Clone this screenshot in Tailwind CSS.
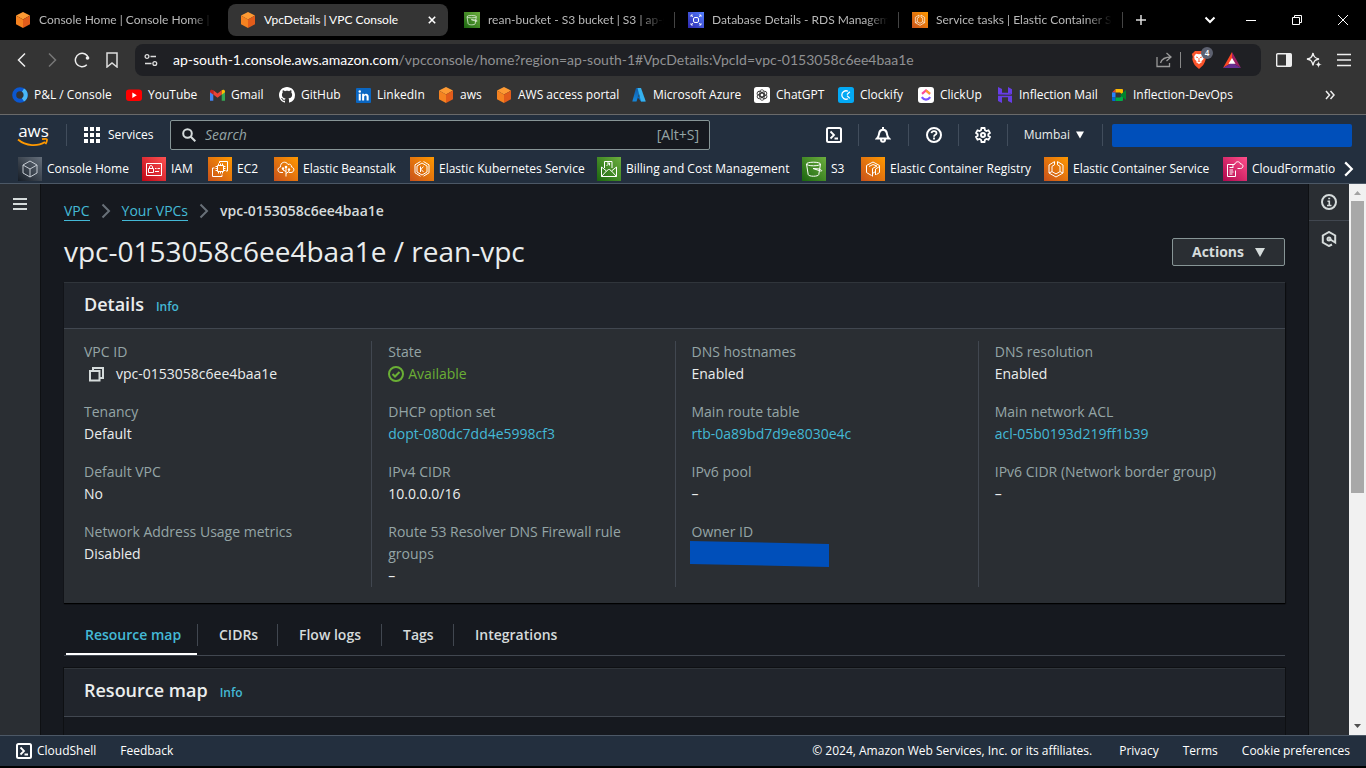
<!DOCTYPE html>
<html lang="en">
<head>
<meta charset="utf-8">
<meta name="viewport" content="width=device-width, initial-scale=1">
<title>VpcDetails | VPC Console</title>
<script src="https://cdn.jsdelivr.net/npm/@tailwindcss/browser@4"></script>
</head>
<body class="h-screen flex flex-col overflow-hidden bg-black text-white text-xs font-['Open_Sans',sans-serif]">

<svg class="absolute w-0 h-0" aria-hidden="true">
  <defs>
    <linearGradient id="g-orange" x1="0" y1="1" x2="1" y2="0"><stop stop-color="#c8511b"/><stop offset="1" stop-color="#f90"/></linearGradient>
    <linearGradient id="g-green" x1="0" y1="1" x2="1" y2="0"><stop stop-color="#1b660f"/><stop offset="1" stop-color="#6cae3e"/></linearGradient>
    <linearGradient id="g-red" x1="0" y1="1" x2="1" y2="0"><stop stop-color="#bd0816"/><stop offset="1" stop-color="#ff5252"/></linearGradient>
    <linearGradient id="g-pink" x1="0" y1="1" x2="1" y2="0"><stop stop-color="#b0084d"/><stop offset="1" stop-color="#ff4f8b"/></linearGradient>
    <linearGradient id="g-blue" x1="0" y1="1" x2="1" y2="0"><stop stop-color="#2e27ad"/><stop offset="1" stop-color="#527fff"/></linearGradient>
    <linearGradient id="g-gray" x1="0" y1="1" x2="1" y2="0"><stop stop-color="#161d26"/><stop offset="1" stop-color="#656f7b"/></linearGradient>
    <linearGradient id="g-az" x1="0" y1="0" x2="0" y2="1"><stop stop-color="#0f5ba8"/><stop offset="1" stop-color="#1488dc"/></linearGradient>
  </defs>
  <symbol id="cube" viewBox="0 0 16 16"><path d="M8 0l7 3.6L8 7.6 1 3.6z" fill="#fd9a33"/><path d="M1 3.6l7 4V16l-7-3.8z" fill="#f58220"/><path d="M15 3.6l-7 4V16l7-3.8z" fill="#e25c1a"/></symbol>
  <symbol id="s3" viewBox="0 0 24 24"><path fill="url(#g-green)" d="M0 0h24v24H0z"/><g fill="none" stroke="#fff"><ellipse cx="11.500" cy="7" rx="7" ry="1.800"/><path d="M4.500 7l1.700 10.500c.3 2.300 10.300 2.300 10.600 0L18.500 7M11 11.500l7.500 2.500c2 .3 1.500-1-1-2z"/></g></symbol>
  <symbol id="ecs" viewBox="0 0 24 24"><path fill="url(#g-orange)" d="M0 0h24v24H0z"/><g fill="none" stroke="#fff"><path d="M10.500 4.600L5 8v8l7 4 7-4V8l-5.500-3.400"/><path d="M10.500 7.800L8 9.300v5.300l4 2.300 4-2.300V9.300l-2.500-1.500M10.500 4.600v3.200M13.500 4.600v3.200M5 16l3-1.400M19 16l-3-1.400"/></g></symbol>
  <symbol id="shell" viewBox="0 0 16 16"><rect x="1" y="1" width="14" height="14" rx="1.500" fill="none" stroke="currentColor" stroke-width="2"/><path d="M4.500 4.500L8 8l-3.500 3.500M8.500 11.500H12" fill="none" stroke="currentColor" stroke-width="1.800"/></symbol>
</svg>

<!-- Browser tab strip -->
<header class="h-10 shrink-0 flex items-center bg-black pl-[3px] text-[#b9b9b9] text-xs font-['Lato','Open_Sans',sans-serif]">
  <nav class="flex gap-1 items-center" aria-label="Tabs">
    <a href="#" class="w-[221px] h-8 px-3 flex items-center gap-2"><svg class="size-4 shrink-0"><use href="#cube"/></svg><span class="flex-1 overflow-hidden whitespace-nowrap [mask-image:linear-gradient(to_right,#000_88%,transparent)]">Console Home | Console Home | ap-south-1</span></a>
    <a href="#" class="w-[220px] h-8 px-3 flex items-center gap-2 rounded-lg bg-[#343434] text-white"><svg class="size-4 shrink-0"><use href="#cube"/></svg><span class="flex-1 whitespace-nowrap">VpcDetails | VPC Console</span><svg class="size-2" viewBox="0 0 8 8" stroke="#fff" stroke-width="1.600"><path d="M.8.8l6.400 6.400M7.200.8L.8 7.200"/></svg></a>
    <a href="#" class="w-[223px] -mr-[3px] h-8 pl-3 flex items-center gap-2"><svg class="size-4 shrink-0"><use href="#s3"/></svg><span class="flex-1 overflow-hidden whitespace-nowrap [mask-image:linear-gradient(to_right,#000_85%,transparent)]">rean-bucket - S3 bucket | S3 | ap-south-1</span><i class="w-px h-4 ml-0.5 bg-[#444]"></i></a>
    <a href="#" class="w-[223px] -mr-[3px] h-8 pl-3 flex items-center gap-2"><svg class="size-4 shrink-0" viewBox="0 0 16 16"><path fill="url(#g-blue)" d="M0 0h16v16H0z"/><g fill="none" stroke="#fff"><path d="M3 5V3h2M11 3h2v2M3 11v2h2M11 13h2v-2M3 3l2 2M13 3l-2 2M3 13l2-2M13 13l-2-2" stroke-width=".8"/><rect x="5.500" y="5.500" width="5" height="5" rx="1.500"/></g></svg><span class="flex-1 overflow-hidden whitespace-nowrap [mask-image:linear-gradient(to_right,#000_88%,transparent)]">Database Details - RDS Management Console</span><i class="w-px h-4 ml-0.5 bg-[#444]"></i></a>
    <a href="#" class="w-[223px] h-8 pl-3 flex items-center gap-2"><svg class="size-4 shrink-0"><use href="#ecs"/></svg><span class="flex-1 overflow-hidden whitespace-nowrap [mask-image:linear-gradient(to_right,#000_85%,transparent)]">Service tasks | Elastic Container Service</span><i class="w-px h-4 ml-0.5 bg-[#444]"></i></a>
  </nav>
  <button aria-label="New tab" class="ml-3"><svg class="size-3" viewBox="0 0 12 12" stroke="#ddd" stroke-width="1.500"><path d="M6 1v10M1 6h10"/></svg></button>
  <div class="ml-auto flex items-center pr-[18px] gap-9">
    <button aria-label="Search tabs"><svg class="w-3 h-3" viewBox="0 0 12 12" fill="none" stroke="#fff" stroke-width="2"><path d="M1.500 3.500L6 8l4.500-4.500"/></svg></button>
    <button aria-label="Minimize" class="-ml-[6px]"><svg class="w-2.5 h-2.5" viewBox="0 0 10 10" stroke="#fff"><path d="M0 5.500h10"/></svg></button>
    <button aria-label="Restore"><svg class="w-2.5 h-2.5" viewBox="0 0 10 10" fill="none" stroke="#fff"><path d="M.5 2.500h7v7h-7zM2.500 2.500v-2h7v7h-2"/></svg></button>
    <button aria-label="Close"><svg class="w-2.5 h-2.5" viewBox="0 0 10 10" stroke="#fff"><path d="M0 0l10 10M10 0L0 10"/></svg></button>
  </div>
</header>

<!-- Address bar -->
<div class="h-10 shrink-0 flex items-center bg-[#343434] pl-[14px] pr-[14px]">
  <div class="flex items-center gap-[14px] w-[121px]">
    <button aria-label="Back"><svg class="size-4" viewBox="0 0 16 16" fill="none" stroke="#eee" stroke-width="1.500"><path d="M11 1.500L4.500 8l6.500 6.500"/></svg></button>
    <button aria-label="Forward"><svg class="size-4" viewBox="0 0 16 16" fill="none" stroke="#777" stroke-width="1.500"><path d="M5 1.500L11.500 8 5 14.500"/></svg></button>
    <button aria-label="Reload"><svg class="size-4" viewBox="0 0 16 16" fill="none" stroke="#eee" stroke-width="1.500"><path d="M12.800 12.800A6.700 6.700 0 1 1 14.600 6.500"/><circle cx="13.500" cy="6" r="1.800" fill="#eee" stroke="none"/></svg></button>
    <button aria-label="Bookmark"><svg class="size-4" viewBox="0 0 16 16" fill="none" stroke="#ddd" stroke-width="1.500"><path d="M3 1h10v14l-5-4-5 4z"/></svg></button>
  </div>
  <div class="flex-1 h-8 flex items-center rounded-lg bg-[#1f2024] pl-2 pr-5">
    <button aria-label="Site information"><svg class="size-4" viewBox="0 0 16 16" fill="none" stroke="#ddd" stroke-width="1.300"><circle cx="4" cy="4.500" r="1.900"/><path d="M7.500 4.500H13M2 11.500h6.500"/><circle cx="11.800" cy="11.500" r="1.900"/></svg></button>
    <div role="textbox" aria-label="Address" class="flex-1 ml-[14px] text-sm leading-5 whitespace-nowrap text-[#909193] font-['Lato','Open_Sans',sans-serif]"><span class="text-white">ap-south-1.console.aws.amazon.com</span>/vpcconsole/home?region=ap-south-1#VpcDetails:VpcId=vpc-0153058c6ee4baa1e</div>
    <button aria-label="Share"><svg class="size-4" viewBox="0 0 16 16" fill="none" stroke="#999" stroke-width="1.300"><path d="M1 5v9.500h12.500V11M10.500 1L15 5l-4.500 4M15 5c-5 0-9 1-10.500 6"/></svg></button>
    <i class="w-px h-4 mx-2 bg-[#888]"></i>
    <button aria-label="Brave Shields, 4 blocked" class="relative ml-0.5"><svg class="w-4 h-[18px]" viewBox="0 0 16 18"><path d="M4 0h8l1.500 1.600L15.200 3l-1 3 .5 2c-1 4-1.700 6-6.700 10C3 14 2.300 12 1.300 8l.5-2-1-3L2.500 1.600z" fill="#fb542b"/><path d="M8 3.200l3-.4 1.800 2.400-.4 3-2 2 .4 1L8 13l-2.800-1.800.4-1-2-2-.4-3L5 2.800z" fill="#fff"/><path d="M5 6l2 .6M11 6l-2 .6M8 7v3l-1.300.8M8 10l1.300.8" stroke="#fb542b" fill="none" stroke-width=".9"/></svg><span class="absolute -top-[4px] left-2.5 size-3 rounded-full bg-[#5d6170] text-[8px] leading-3 font-semibold text-center">4</span></button>
    <button aria-label="Rewards" class="ml-4"><svg class="w-[18px] h-4" viewBox="0 0 18 16"><path d="M9 0L0 16l9-5.500z" fill="#ff4724"/><path d="M9 0l9 16-9-5.500z" fill="#9e1f63"/><path d="M0 16h18L9 10.500z" fill="#662d91"/><path d="M9 6l3.500 5.800h-7z" fill="#fff"/></svg></button>
  </div>
  <div class="flex items-center gap-[14px] pl-[15px]">
    <button aria-label="Sidebar"><svg class="size-4" viewBox="0 0 16 16"><rect x=".7" y="1.700" width="14.600" height="12.600" rx="1" fill="none" stroke="#eee" stroke-width="1.400"/><path d="M10 2h5v12h-5z" fill="#eee"/></svg></button>
    <button aria-label="Leo AI"><svg class="size-4" viewBox="0 0 16 16" fill="none" stroke="#eee" stroke-width="1.400"><path d="M7 1C7.700 5 9 6.300 13 7c-4 .8-5.300 2-6 6.500-.8-4.500-2-5.700-6-6.500 4-.7 5.200-2 6-6z"/><path d="M12.500 9c.3 2.300 1 3.200 3.500 3.500-2.500.3-3.200 1-3.500 3.500-.3-2.500-1-3.200-3.500-3.500 2.500-.3 3.200-1.200 3.500-3.500z" fill="#eee" stroke="none"/></svg></button>
    <button aria-label="Menu"><svg class="size-4" viewBox="0 0 16 16" stroke="#eee" stroke-width="1.500"><path d="M1 2.500h14M1 8h14M1 13.500h14"/></svg></button>
  </div>
</div>

<!-- Bookmarks -->
<nav aria-label="Bookmarks" class="h-[35px] shrink-0 flex items-center bg-[#343434] border-b border-[#6a6a6a] pl-3 pb-1 whitespace-nowrap">
  <a href="#" class="w-[114px] flex items-center gap-1.5"><svg class="size-4" viewBox="0 0 16 16" fill="none" stroke-width="4"><circle cx="8" cy="8" r="5.800" stroke="#0b57d0"/><path d="M11 3.100a5.800 5.800 0 0 1 0 9.800" stroke="#4ab8f5"/></svg>P&amp;L / Console</a>
  <a href="#" class="w-[84px] flex items-center gap-1.5"><svg class="size-4" viewBox="0 0 16 16"><rect y="2.500" width="16" height="11.500" rx="3" fill="#f00"/><path d="M6.300 5.500v5.500l4.500-2.700z" fill="#fff"/></svg>YouTube</a>
  <a href="#" class="w-[69px] flex items-center gap-1.5"><svg class="w-[15px] h-4" viewBox="0 0 16 16"><path d="M0 4v10h3.500V6.500z" fill="#4285f4"/><path d="M16 4v10h-3.500V6.500z" fill="#34a853"/><path d="M3.500 3L8 6.500 12.500 3v4.500L8 11 3.500 7.500z" fill="#ea4335"/><path d="M12.500 3C14 1.800 16 2.500 16 4.300V5l-3.500 2.700z" fill="#fbbc04"/><path d="M3.500 3C2 1.800 0 2.500 0 4.300V5l3.500 2.700z" fill="#c5221f"/></svg>Gmail</a>
  <a href="#" class="w-[77px] flex items-center gap-1.5"><svg class="size-4" viewBox="0 0 16 16" fill="#fff"><path d="M8 0C3.580 0 0 3.580 0 8c0 3.540 2.290 6.530 5.470 7.590.4.070.55-.17.55-.38 0-.19-.01-.82-.01-1.490-2.010.37-2.530-.49-2.690-.94-.09-.23-.48-.94-.82-1.130-.28-.15-.68-.52-.01-.53.63-.01 1.080.58 1.230.82.72 1.210 1.870.87 2.330.66.070-.52.28-.87.51-1.070-1.780-.2-3.640-.89-3.640-3.950 0-.87.31-1.590.82-2.150-.08-.2-.36-1.020.08-2.120 0 0 .67-.21 2.200.82.64-.18 1.320-.27 2-.27s1.360.09 2 .27c1.530-1.040 2.200-.82 2.200-.82.44 1.100.16 1.920.08 2.120.51.560.82 1.270.82 2.150 0 3.070-1.870 3.750-3.650 3.950.29.25.54.73.54 1.480 0 1.070-.01 1.930-.01 2.200 0 .21.15.46.55.38A8.010 8.010 0 0 0 16 8c0-4.420-3.580-8-8-8z"/></svg>GitHub</a>
  <a href="#" class="w-[82px] flex items-center gap-1.5"><svg class="w-[15px] h-[15px]" viewBox="0 0 16 16"><rect width="16" height="16" rx="1" fill="#0a66c2"/><circle cx="4" cy="3.800" r="1.300" fill="#fff"/><path d="M2.900 6.200h2.200v7H2.900zM6.500 6.200h2v1c1.200-1.900 5-1.600 5 1.800v4.200h-2.200V9.500c0-2.200-2.600-1.900-2.600 0v3.700H6.500z" fill="#fff"/></svg>LinkedIn</a>
  <a href="#" class="w-[58px] flex items-center gap-1.5"><svg class="size-4"><use href="#cube"/></svg>aws</a>
  <a href="#" class="w-[135px] flex items-center gap-1.5"><svg class="size-4"><use href="#cube"/></svg>AWS access portal</a>
  <a href="#" class="w-[123px] flex items-center gap-1.5"><svg class="size-4" viewBox="0 0 16 16"><path d="M5 1h5L5.500 14.500H1.300z" fill="url(#g-az)"/><path d="M6 9.500h6l2 5H10z" fill="#0a6cc0"/><path d="M6.500 1H10l4.800 13.500H10z" fill="#35b1ee"/></svg>Microsoft Azure</a>
  <a href="#" class="w-[84px] flex items-center gap-1.5"><svg class="size-4" viewBox="0 0 16 16"><rect width="16" height="16" rx="2.500" fill="#fff"/><g fill="none" stroke="#333" stroke-width=".9"><path id="petal" d="M8 5.600L5.900 6.900v4.500c.4 2.200 3.300 2.400 4.200.6M8 5.600l3.600 2.100"/><use href="#petal" transform="rotate(60 8 8)"/><use href="#petal" transform="rotate(120 8 8)"/><use href="#petal" transform="rotate(180 8 8)"/><use href="#petal" transform="rotate(240 8 8)"/><use href="#petal" transform="rotate(300 8 8)"/></g></svg>ChatGPT</a>
  <a href="#" class="w-[80px] flex items-center gap-1.5"><svg class="size-4" viewBox="0 0 16 16"><rect width="16" height="16" rx="2.500" fill="#03a9f4"/><path d="M10 4.300a4.200 4.200 0 1 0 0 7.400M9 7.600l2.800-2.800M9 8.600l2.800 2.800" fill="none" stroke="#fff" stroke-width="1.300"/></svg>Clockify</a>
  <a href="#" class="w-[79px] flex items-center gap-1.5"><svg class="size-4" viewBox="0 0 16 16" fill="none" stroke-width="2.200"><rect width="16" height="16" rx="3" fill="#fff"/><path d="M4 6.800L8 3.500l4 3.300" stroke="#fd4a9c"/><path d="M8 3.500l4 3.300" stroke="#ffa12f"/><path d="M3.800 10.200c2.200 3.200 6.200 3.200 8.400 0" stroke="#7b52ff"/></svg>ClickUp</a>
  <a href="#" class="w-[114px] flex items-center gap-1.5"><svg class="size-4" viewBox="0 0 16 16" fill="#673de6"><path d="M1 7.500V0l4 2v3.800h5.500l4.500 2zM11 6V0l4 2.200v5zM1 8.800h14V16l-4-2v-3.700H5V16l-4-2z"/></svg>Inflection Mail</a>
  <a href="#" class="flex items-center gap-1.5"><svg class="size-4" viewBox="0 0 16 16"><path d="M1 5.500L4.500 2v3.500z" fill="#ea4335"/><path d="M1 5.500h3.500v5H1z" fill="#2684fc"/><path d="M1 10.500h3.500V14H2a1 1 0 0 1-1-1z" fill="#0066da"/><path d="M4.500 2H11a1 1 0 0 1 1 1v5L9 5.500H4.500z" fill="#ffba00"/><path d="M4.500 10.500H9L12 8v5a1 1 0 0 1-1 1H4.500z" fill="#00ac47"/><path d="M9 8l6-5v10z" fill="#00832d"/></svg>Inflection-DevOps</a>
  <button aria-label="More bookmarks" class="ml-auto mr-[31px]"><svg class="size-[10px]" viewBox="0 0 10 10" fill="none" stroke="#eee" stroke-width="1.500"><path d="M1 1l3.500 4L1 9M5.500 1L9 5 5.500 9"/></svg></button>
</nav>

<!-- AWS navigation -->
<header class="h-[69px] shrink-0 bg-[#232f3e] border-b border-[#4c5866] flex flex-col font-medium">
  <div class="h-10 flex items-center">
    <a href="#" aria-label="AWS" class="ml-[17px] w-[33px] relative h-6 flex justify-center"><span class="text-[17px] leading-4 font-medium">aws</span><svg class="absolute left-0 bottom-0 w-8 h-2.5" viewBox="0 0 32 10" fill="none" stroke="#f90" stroke-width="1.800"><path d="M1 2.500c8 7 20 7 27 2.500M25 2.200c6-1 6-.2 3.500 5"/></svg></a>
    <i class="w-px h-[22px] bg-[#414d5c] ml-4"></i>
    <button class="w-[86px] ml-[17px] flex items-center gap-2"><svg class="size-4" viewBox="0 0 16 16" fill="#fff"><path d="M0 0h4v4H0zM6 0h4v4H6zM12 0h4v4h-4zM0 6h4v4H0zM6 6h4v4H6zM12 6h4v4h-4zM0 12h4v4H0zM6 12h4v4H6zM12 12h4v4h-4z"/></svg>Services</button>
    <label class="w-[540px] h-[30px] flex items-center border border-[#879596] rounded-xs bg-[#16191f] pl-[11px] pr-2.5 text-sm font-normal text-[#95a5a6]"><svg class="size-[14px]" viewBox="0 0 14 14" fill="none" stroke="#d5dbdb" stroke-width="2"><circle cx="5.500" cy="5.500" r="4.300"/><path d="M8.800 8.800L13.300 13.300"/></svg><input type="text" aria-label="Search" placeholder="Search" class="ml-[9px] flex-1 min-w-0 bg-transparent outline-none italic placeholder:text-[#95a5a6]"><span>[Alt+S]</span></label>
    <div class="ml-auto mr-[14px] flex items-center">
      <button aria-label="CloudShell"><svg class="size-4"><use href="#shell"/></svg></button>
      <i class="w-px h-[22px] bg-[#414d5c] mx-4"></i>
      <button aria-label="Notifications"><svg class="size-4" viewBox="0 0 16 16" fill="none" stroke="#fff" stroke-width="2"><path d="M8 0v2M2 11.500C4 9.500 3.800 8 4.200 6c.8-4.500 6.800-4.500 7.600 0 .4 2 .2 3.500 2.200 5.500zM6 12.500c0 3 4 3 4 0"/></svg></button>
      <i class="w-px h-[22px] bg-[#414d5c] mx-[17px]"></i>
      <button aria-label="Help"><svg class="size-4" viewBox="0 0 16 16" fill="none" stroke="#fff" stroke-width="2"><circle cx="8" cy="8" r="7"/><path d="M5.500 6.200c.3-3 5-2.700 5 0 0 1.700-2.500 1.600-2.500 3.500M8 10.500v2" stroke-width="1.800"/></svg></button>
      <i class="w-px h-[22px] bg-[#414d5c] mx-4"></i>
      <button aria-label="Settings"><svg class="size-4" viewBox="0 0 16 16" fill="none" stroke="#fff" stroke-width="2"><path d="M6.500 1h3l.5 2.200 1.300.8 2.200-.7L15 6l-1.700 1.300v1.500L15 10l-1.500 2.700-2.200-.7-1.300.8L9.500 15h-3L6 12.800 4.700 12l-2.200.7L1 10l1.700-1.200V7.300L1 6l1.500-2.700 2.200.7L6 3.200z" stroke-width="1.800"/><circle cx="8" cy="8" r="2"/></svg></button>
      <i class="w-px h-[22px] bg-[#414d5c] mx-4"></i>
      <button class="flex items-center gap-1.5 text-[#eaeded]">Mumbai<svg class="w-2 h-2" viewBox="0 0 8 8" fill="#fff"><path d="M0 .5h8L4 7.500z"/></svg></button>
      <i class="w-px h-[22px] bg-[#414d5c] ml-[18px] mr-[9px]"></i>
      <button aria-label="Account" class="w-[240px] h-[23px] rounded-xs bg-[#004fba]"></button>
    </div>
  </div>
  <nav aria-label="Favorites" class="h-7 flex items-center pl-[18px] whitespace-nowrap">
    <div class="flex-1 min-w-0 flex overflow-hidden *:shrink-0 *:flex *:items-center *:gap-[5px]">
      <a href="#" class="w-[124px]"><svg class="size-6" viewBox="0 0 24 24"><path fill="url(#g-gray)" d="M0 0h24v24H0z"/><path d="M12 4l7 4v8l-7 4-7-4V8zM5 8l7 4 7-4M12 12v8" fill="none" stroke="#c5cbd2"/></svg>Console Home</a>
      <a href="#" class="w-[66px]"><svg class="size-6" viewBox="0 0 24 24"><path fill="url(#g-red)" d="M0 0h24v24H0z"/><path d="M4.500 6.500h15v12h-15zM6.500 11.500h5v4h-5zM7.500 11.500V9.800c0-1.600 3-1.600 3 0v1.700M13 11.500h1.500M15.500 11.500H18M13 14.500h4" fill="none" stroke="#fff"/></svg>IAM</a>
      <a href="#" class="w-[66px]"><svg class="size-6" viewBox="0 0 24 24"><path fill="url(#g-orange)" d="M0 0h24v24H0z"/><path d="M9.500 8.500h6v6h-6zM10.500 8.500v-2M12.500 8.500v-2M14.500 8.500v-2M10.500 16.500v-2M12.500 16.500v-2M14.500 16.500v-2M9.500 9.500h-2M9.500 11.500h-2M9.500 13.500h-2M17.500 9.500h-2M17.500 11.500h-2M17.500 13.500h-2M11.500 6V4.500h8V14h-1.500M6.500 11H4.500v8.500h9.500v-2" fill="none" stroke="#fff"/></svg>EC2</a>
      <a href="#" class="w-[136px]"><svg class="size-6" viewBox="0 0 24 24"><path fill="url(#g-orange)" d="M0 0h24v24H0z"/><path d="M9 15.500H7c-4 0-4-5-.5-5.500C6 5 12 3.500 14 7.500c2-1 3.500.3 3.500 2.500 3.500.5 3 5.500-.5 5.500h-2M12 19.500v-9M12 14.500l-3-1.500v-2M12 16.500l3-2v-2.500" fill="none" stroke="#fff"/><circle cx="12" cy="10" r="1.300" fill="#fff"/><circle cx="9" cy="11.500" r="1.200" fill="#fff"/><circle cx="15" cy="12.500" r="1.200" fill="#fff"/></svg>Elastic Beanstalk</a>
      <a href="#" class="w-[187px]"><svg class="size-6" viewBox="0 0 24 24"><path fill="url(#g-orange)" d="M0 0h24v24H0z"/><path d="M10.500 4.500L5 7.800v8l5.500 3.400M13.500 4.500L19 7.800v8l-5.500 3.400M12 6l5 3v6l-5 3-5-3V9zM10.500 9.500v5.500M13.500 9.500l-2.500 2.800 2.500 2.700" fill="none" stroke="#fff"/></svg>Elastic Kubernetes Service</a>
      <a href="#" class="w-[205px]"><svg class="size-6" viewBox="0 0 24 24"><path fill="url(#g-green)" d="M0 0h24v24H0z"/><path d="M7.500 11V4.500h7.500V11M9.500 9l3-3M10 6h2.500v2.500M4.500 10v9.500h15V10M4.500 10l5 4 2-1.500h1l2 1.500 5-4M4.500 19.500l5-5.500M19.500 19.500l-5-5.500" fill="none" stroke="#fff"/></svg>Billing and Cost Management</a>
      <a href="#" class="w-[59px]"><svg class="size-6"><use href="#s3"/></svg>S3</a>
      <a href="#" class="w-[183px]"><svg class="size-6" viewBox="0 0 24 24"><path fill="url(#g-orange)" d="M0 0h24v24H0z"/><path d="M10.500 18.500L5.500 15.500V8.500L12 5l6.500 3.500v7l-3 2M8 9.500l4-2 4 1.500-4.500 2.500v8M14.500 18v-6l4-2.500M14.500 14.500l-3 2" fill="none" stroke="#fff"/></svg>Elastic Container Registry</a>
      <a href="#" class="w-[179px]"><svg class="size-6"><use href="#ecs"/></svg>Elastic Container Service</a>
      <a href="#"><svg class="size-6" viewBox="0 0 24 24"><path fill="url(#g-pink)" d="M0 0h24v24H0z"/><path d="M11.500 7.500h-7v12h8v-6M6.500 10.500h4M6.500 13h3.500M6.500 15h4M6.500 17h3M10 10c-.5-2 .5-3 2-3 .5-3 5-3 5.500 0 3.500 0 3 4.500 0 4.500h-3" fill="none" stroke="#fff"/></svg>CloudFormation</a>
    </div>
    <button aria-label="Scroll favorites" class="w-[31px] pl-2"><svg class="w-[11px] h-4" viewBox="0 0 10 14" fill="none" stroke="#fff" stroke-width="2"><path d="M2 1l6 6-6 6"/></svg></button>
  </nav>
</header>

<!-- Console body -->
<div class="flex-1 min-h-0 flex bg-[#16191f]">
  <aside class="w-10 shrink-0 bg-[#2a2e33] pl-[13px] pt-[14px] mr-px shadow-[1px_0_0_#0e1013]">
    <button aria-label="Open navigation"><svg class="w-[14px] h-3 block" viewBox="0 0 14 12" stroke="#d5dbdb" stroke-width="2"><path d="M0 1h14M0 6h14M0 11h14"/></svg></button>
  </aside>

  <main class="flex-1 min-w-0 overflow-hidden pt-4 pl-[23px] pr-6 text-sm leading-[22px] text-[#eaeded]">
    <nav aria-label="Breadcrumb" class="flex items-center h-[22px] gap-[11px]">
      <a href="#" class="text-[#44b9d6] leading-[18px] border-b border-[#44b9d6]">VPC</a>
      <svg class="w-[10px] h-4" viewBox="0 0 10 16" fill="none" stroke="#687078" stroke-width="2"><path d="M1.500 1.500L8 8l-6.500 6.500"/></svg>
      <a href="#" class="text-[#44b9d6] leading-[18px] border-b border-[#44b9d6]">Your VPCs</a>
      <svg class="w-[10px] h-4" viewBox="0 0 10 16" fill="none" stroke="#687078" stroke-width="2"><path d="M1.500 1.500L8 8l-6.500 6.500"/></svg>
      <span class="font-semibold text-[#d5dbdb]">vpc-0153058c6ee4baa1e</span>
    </nav>
    <div class="mt-3 mb-3 h-9 flex items-center justify-between">
      <h1 class="h-9 text-[28px] leading-[34px]">vpc-0153058c6ee4baa1e / rean-vpc</h1>
      <button class="w-[113px] h-7 flex items-center justify-center gap-[11px] border border-[#879596] rounded-xs bg-[#2a2e33] font-bold text-[#d5dbdb]">Actions<svg class="w-[10px] h-[9px]" viewBox="0 0 10 9" fill="#d5dbdb"><path d="M0 0h10L5 9z"/></svg></button>
    </div>

    <section class="bg-[#2a2e33] border-t border-[#30353b] shadow-[0_1px_1px_#000,1px_1px_1px_#0e1013]">
      <header class="h-[46px] flex items-baseline gap-3 px-5 pt-2.5 bg-[#21252c] border-b border-[#414750]">
        <h2 class="text-lg leading-[22px] font-semibold">Details</h2><a href="#" class="text-xs font-semibold text-[#44b9d6]">Info</a>
      </header>
      <div class="grid grid-cols-4 px-1 pt-3 pb-4 text-[#eaeded] *:px-4 *:border-l *:border-[#414750] *:flex *:flex-col *:gap-4 [&_dt]:text-[#95a5a6] [&_a]:text-[#44b9d6]">
        <dl class="border-l-0!">
          <div><dt>VPC ID</dt><dd class="flex items-center"><button aria-label="Copy VPC ID" class="ml-[5px] mr-3"><svg class="w-[15px] h-[15px] block" viewBox="0 0 15 15" fill="none" stroke="#d5dbdb" stroke-width="2"><path d="M1 4h9.500v9.500H1zM4 3.500V1h10v10h-3"/></svg></button>vpc-0153058c6ee4baa1e</dd></div>
          <div><dt>Tenancy</dt><dd>Default</dd></div>
          <div><dt>Default VPC</dt><dd>No</dd></div>
          <div><dt>Network Address Usage metrics</dt><dd>Disabled</dd></div>
        </dl>
        <dl>
          <div><dt>State</dt><dd class="flex items-center gap-1 text-[#6aaf35]"><svg class="size-4" viewBox="0 0 16 16" fill="none" stroke="currentColor" stroke-width="2"><circle cx="8" cy="8" r="7"/><path d="M4.500 8l2.500 2.500L11.500 6"/></svg>Available</dd></div>
          <div><dt>DHCP option set</dt><dd><a href="#">dopt-080dc7dd4e5998cf3</a></dd></div>
          <div><dt>IPv4 CIDR</dt><dd>10.0.0.0/16</dd></div>
          <div><dt>Route 53 Resolver DNS Firewall rule groups</dt><dd>–</dd></div>
        </dl>
        <dl>
          <div><dt>DNS hostnames</dt><dd>Enabled</dd></div>
          <div><dt>Main route table</dt><dd><a href="#">rtb-0a89bd7d9e8030e4c</a></dd></div>
          <div><dt>IPv6 pool</dt><dd>–</dd></div>
          <div><dt>Owner ID</dt><dd><svg class="w-[139px] h-[26px] block -ml-0.5 -mt-0.5" viewBox="0 0 139 26"><path d="M0 0l139 3v23L0 23z" fill="#004fba"/></svg></dd></div>
        </dl>
        <dl>
          <div><dt>DNS resolution</dt><dd>Enabled</dd></div>
          <div><dt>Main network ACL</dt><dd><a href="#">acl-05b0193d219ff1b39</a></dd></div>
          <div><dt>IPv6 CIDR (Network border group)</dt><dd>–</dd></div>
        </dl>
      </div>
    </section>

    <div role="tablist" class="mt-[21px] h-8 flex items-start border-b border-[#414750] pl-0.5 font-semibold text-[#d5dbdb] *:h-[22px] *:text-left *:pl-[21px] *:border-r *:border-[#414750] *:whitespace-nowrap">
      <button role="tab" aria-selected="true" class="relative w-[132px] pl-[19px]! text-[#44b9d6] after:absolute after:left-0 after:right-0 after:-bottom-[9px] after:h-0.5 after:bg-white">Resource map</button>
      <button role="tab" class="w-20">CIDRs</button>
      <button role="tab" class="w-[104px]">Flow logs</button>
      <button role="tab" class="w-[72px]">Tags</button>
      <button role="tab" class="w-[124px] border-transparent!">Integrations</button>
    </div>

    <section class="mt-3 h-40 border-t border-[#30353b] shadow-[0_0_0_1px_#0e1013]">
      <header class="h-12 flex items-baseline gap-3 px-5 pt-2.5 bg-[#21252c] border-b border-[#414750]">
        <h2 class="text-lg leading-[22px] font-semibold">Resource map</h2><a href="#" class="text-xs font-semibold text-[#44b9d6]">Info</a>
      </header>
    </section>
  </main>

  <aside class="w-10 shrink-0 flex flex-col items-center bg-[#2a2e33] shadow-[-1px_0_0_#0e1013] text-[#d5dbdb]">
    <button aria-label="Info panel" class="w-full h-[37px] border-b border-[#414750] flex justify-center items-center"><svg class="size-4" viewBox="0 0 16 16" fill="none" stroke="currentColor" stroke-width="2"><circle cx="8" cy="8" r="7"/><path d="M6.500 7.200h1.800V12M6 11.500h4.500M7.200 4.500h2" stroke-width="1.600"/></svg></button>
    <button aria-label="Amazon Q" class="h-9 flex items-center"><svg class="size-4" viewBox="0 0 16 16" fill="none" stroke="currentColor" stroke-width="2"><path d="M11 13.500L8 15l-6.200-3.500v-7L8 1l6.200 3.500v7L8.500 8"/><circle cx="8" cy="8" r="1.500"/></svg></button>
  </aside>

  <div aria-hidden="true" class="w-[17px] shrink-0 flex flex-col items-center bg-[#f1f1f1] pt-[7px] pb-[7px]">
    <svg class="w-[7px] h-1" viewBox="0 0 7 4" fill="#a3a3a3"><path d="M0 4h7L3.500 0z"/></svg>
    <i class="w-[13px] h-[292px] mt-[6px] bg-[#a8a8a8]"></i>
    <svg class="w-[7px] h-1 mt-auto" viewBox="0 0 7 4" fill="#505050"><path d="M0 0h7L3.500 4z"/></svg>
  </div>
</div>

<!-- Footer -->
<footer class="h-[31px] shrink-0 mb-0.5 flex items-center bg-[#232f3e] border-t border-[#4c5866] px-4">
  <button class="flex items-center gap-[5px]"><svg class="size-4"><use href="#shell"/></svg>CloudShell</button>
  <button class="ml-6">Feedback</button>
  <span class="ml-auto">© 2024, Amazon Web Services, Inc. or its affiliates.</span>
  <a href="#" class="ml-[27px]">Privacy</a>
  <a href="#" class="ml-6">Terms</a>
  <a href="#" class="ml-6">Cookie preferences</a>
</footer>
</body>
</html>
